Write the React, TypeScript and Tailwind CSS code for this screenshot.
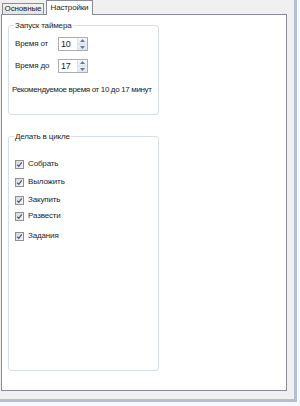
import React from 'react';

function Spin({ value }: { value: string }) {
  return (
    <div className="flex h-[14px] w-[30px] border border-[#abadb3] bg-white">
      <span className="flex-1 pl-[2px] text-[9px] leading-[12px]">{value}</span>
      <div className="flex w-[10px] flex-col border-l border-[#dde1e8]">
        <div className="flex flex-1 items-center justify-center border-b border-[#dde1e8] bg-gradient-to-b from-[#f6f8fb] to-[#e3e8f0]">
          <svg width="5" height="3" viewBox="0 0 5 3"><path d="M0 3 L2.5 0 L5 3 Z" fill="#6a7795" /></svg>
        </div>
        <div className="flex flex-1 items-center justify-center bg-gradient-to-b from-[#eef1f6] to-[#dfe5ee]">
          <svg width="5" height="3" viewBox="0 0 5 3"><path d="M0 0 L2.5 3 L5 0 Z" fill="#6a7795" /></svg>
        </div>
      </div>
    </div>
  );
}

function Check({ label, className }: { label: string; className: string }) {
  return (
    <label className={`flex h-[10px] items-center gap-[4px] ${className}`}>
      <span className="flex h-[9px] w-[9px] items-center justify-center border border-[#8f8f8f] bg-gradient-to-br from-[#d8d8d8] to-[#f7f7f7]">
        <svg width="7" height="7" viewBox="0 0 7 7"><path d="M1.2 3.7 L2.8 5.3 L5.8 1.4" stroke="#4a5d8c" strokeWidth="1.3" fill="none" /></svg>
      </span>
      <span>{label}</span>
    </label>
  );
}

export default function App() {
  return (
    <div className="h-[406px] w-[300px] overflow-hidden bg-[#f7f8fb] font-['Liberation_Sans',sans-serif] text-[8px] tracking-[-0.15px] text-[#1e1e1e]">
      <div className="h-[402px] w-[297px] border-b-[3px] border-r-[3px] border-[#b3bfd8] bg-[#f0f0f0]">
        <div className="ml-[1px] flex h-[391px] w-[286px] flex-col">
          <div className="flex h-[14px] items-end">
            <div className="ml-[1px] flex h-[11px] w-[42px] items-center justify-center border border-b-0 border-[#898c95] bg-gradient-to-b from-[#f2f2f2] to-[#e3e3e3] leading-none">
              Основные
            </div>
            <div className="relative z-10 -mb-[1px] ml-[2px] flex h-[15px] w-[47px] items-center justify-center border border-b-0 border-[#898c95] bg-white pb-[1px] leading-none">
              Настройки
            </div>
          </div>
          <div className="flex flex-1 flex-col border border-[#898c95] bg-white px-[6px] pt-[5px]">
            <fieldset className="h-[95px] w-[151px] min-w-0 rounded-[3px] border border-[#d5dfe5] px-[6px]">
              <legend className="ml-[-1px] px-[1px] leading-[11px]">Запуск таймера</legend>
              <div className="mt-[6px] flex items-center">
                <span className="w-[43px]">Время от</span>
                <Spin value="10" />
              </div>
              <div className="mt-[8px] flex items-center">
                <span className="w-[43px]">Время до</span>
                <Spin value="17" />
              </div>
              <p className="mt-[11px] -ml-[3px] whitespace-nowrap tracking-[-0.35px]">Рекомендуемое время от 10 до 17 минут</p>
            </fieldset>
            <fieldset className="mt-[16px] h-[240px] w-[151px] min-w-0 rounded-[3px] border border-[#d5dfe5] px-[6px]">
              <legend className="ml-[-1px] px-[1px] leading-[11px]">Делать в цикле</legend>
              <div className="flex flex-col">
                <Check label="Собрать" className="mt-[17px]" />
                <Check label="Выложить" className="mt-[8px]" />
                <Check label="Закупить" className="mt-[8px]" />
                <Check label="Развести" className="mt-[6px]" />
                <Check label="Задания" className="mt-[10px]" />
              </div>
            </fieldset>
          </div>
        </div>
      </div>
    </div>
  );
}
